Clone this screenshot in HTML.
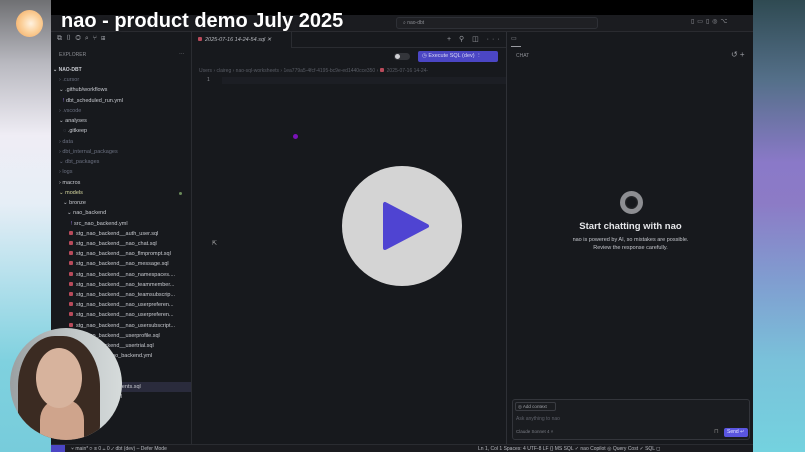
<!DOCTYPE html>
<html><head><meta charset="utf-8"><style>
*{margin:0;padding:0;box-sizing:border-box}
body{width:805px;height:452px;overflow:hidden;position:relative;font-family:"Liberation Sans",sans-serif;background:#000}
.lg{position:absolute;left:0;top:0;width:51px;height:452px;background:linear-gradient(180deg,#6f7073 0%,#b9b9c0 14%,#efedf5 30%,#e6eef6 45%,#b4e0ec 62%,#7fd1df 80%,#77ccdb 100%)}
.rg{position:absolute;left:753px;top:0;width:52px;height:452px;background:linear-gradient(180deg,#2f4a52 0%,#55708a 18%,#8a79c8 36%,#8c7bc6 45%,#809dd0 62%,#7ac2da 80%,#74d2df 100%)}
.app{position:absolute;left:51px;top:0;width:702px;height:452px;background:#181a1e;overflow:hidden}
.topblk{position:absolute;left:0;top:0;width:702px;height:15px;background:#000}
.tbar{position:absolute;left:0;top:15px;width:702px;height:17px;background:#1b1c20;border-bottom:1px solid #2a2b30}
.search{position:absolute;left:345px;top:2px;width:202px;height:12px;border:1px solid #2e3036;border-radius:3px;background:#1f2024;color:#8a8c92;font-size:5px;line-height:10px;padding-left:6px}
.side{position:absolute;left:0;top:32px;width:141px;height:412px;background:#17191d;border-right:1px solid #2a2c31}
.ed{position:absolute;left:141px;top:32px;width:314px;height:412px;background:#17191d}
.chat{position:absolute;left:455px;top:32px;width:247px;height:412px;background:#17191d;border-left:1px solid #2e3036}
.status{position:absolute;left:0;top:444px;width:702px;height:8px;background:#1a1b1f;border-top:1px solid #2a2c31;font-size:5px;color:#b8bac0;line-height:8px;white-space:nowrap}
.t{position:absolute;font-size:5.5px;color:#c7c9cf;white-space:nowrap}
.row{position:absolute;font-size:5.5px;color:#c9cbd1;white-space:nowrap;height:10px;line-height:10px}
.dim{color:#6b7080}
.sq{display:inline-block;width:4px;height:4px;background:#b84a5a;border-radius:1px;margin-right:3px;vertical-align:0}
.title{position:absolute;left:61px;top:10px;font-size:20px;font-weight:bold;color:#fff;text-shadow:0 0 3px rgba(0,0,0,.4);white-space:nowrap}
.logo{position:absolute;left:16px;top:10px;width:27px;height:27px;border-radius:50%;background:radial-gradient(circle at 55% 50%,#fff2e0 0%,#fbd09a 45%,#f2a55a 100%)}
.play{position:absolute;left:342px;top:166px;width:120px;height:120px;border-radius:50%;background:#d4d4d4}
.cam{position:absolute;left:10px;top:328px;width:112px;height:112px;border-radius:50%;overflow:hidden;background:linear-gradient(90deg,#9aa0a2,#c3c9ca 60%,#d6dbdb)}
.hair{position:absolute;left:8px;top:8px;width:82px;height:112px;border-radius:45% 45% 20% 20%;background:#3b2b22}
.face{position:absolute;left:26px;top:20px;width:46px;height:60px;border-radius:50%;background:#d7b39d}
.neck{position:absolute;left:30px;top:72px;width:44px;height:50px;border-radius:40% 40% 0 0;background:#cfa48c}
</style></head><body>
<div class="lg"></div><div class="rg"></div>
<div class="app">
<div class="topblk"></div>
<div class="tbar"><div class="search">⌕ nao-dbt</div>
<div class="t" style="left:640px;top:3px;color:#9a9ca2;font-size:6px;letter-spacing:3px">▯▭▯◎⌥</div></div>
<div class="side">
<div class="t" style="left:6px;top:3px;color:#9a9ca2;font-size:7px;letter-spacing:4px">⧉▯◎⌕⑂⊞</div>
<div class="t" style="left:8px;top:20px;font-size:5px;color:#8c8e94">EXPLORER</div>
<div class="t" style="left:128px;top:19px;color:#8c8e94">···</div>
<div class="row" style="left:2px;top:33px;font-weight:bold;font-size:5px">⌄ NAO-DBT</div>
<div class="row dim" style="left:8px;top:43px">›  .cursor</div>
<div class="row" style="left:8px;top:53px">⌄ .github/workflows</div>
<div class="row" style="left:12px;top:64px"><span style="color:#9b7be0">!</span>  dbt_scheduled_run.yml</div>
<div class="row dim" style="left:8px;top:74px">›  .vscode</div>
<div class="row" style="left:8px;top:84px">⌄ analyses</div>
<div class="row" style="left:12px;top:94px"><span class="dim">◌</span> .gitkeep</div>
<div class="row dim" style="left:8px;top:105px">›  data</div>
<div class="row dim" style="left:8px;top:115px">›  dbt_internal_packages</div>
<div class="row dim" style="left:8px;top:125px">⌄ dbt_packages</div>
<div class="row dim" style="left:8px;top:135px">›  logs</div>
<div class="row" style="left:8px;top:146px">›  macros</div>
<div class="row" style="left:8px;top:156px;color:#d8d9a0">⌄ models</div>
<div style="position:absolute;left:128px;top:160px;width:3px;height:3px;border-radius:50%;background:#6a8a5a"></div>
<div class="row" style="left:12px;top:166px">⌄ bronze</div>
<div class="row" style="left:16px;top:176px">⌄ nao_backend</div>
<div class="row" style="left:20px;top:187px"><span style="color:#9b7be0">!</span>  src_nao_backend.yml</div>
<div class="row" style="left:18px;top:197px"><span class="sq"></span>stg_nao_backend__auth_user.sql</div>
<div class="row" style="left:18px;top:207px"><span class="sq"></span>stg_nao_backend__nao_chat.sql</div>
<div class="row" style="left:18px;top:217px"><span class="sq"></span>stg_nao_backend__nao_flmprompt.sql</div>
<div class="row" style="left:18px;top:227px"><span class="sq"></span>stg_nao_backend__nao_message.sql</div>
<div class="row" style="left:18px;top:238px"><span class="sq"></span>stg_nao_backend__nao_namespaces....</div>
<div class="row" style="left:18px;top:248px"><span class="sq"></span>stg_nao_backend__nao_teammember...</div>
<div class="row" style="left:18px;top:258px"><span class="sq"></span>stg_nao_backend__nao_teamsubscrip...</div>
<div class="row" style="left:18px;top:268px"><span class="sq"></span>stg_nao_backend__nao_userpreferen...</div>
<div class="row" style="left:18px;top:278px"><span class="sq"></span>stg_nao_backend__nao_userpreferen...</div>
<div class="row" style="left:18px;top:289px"><span class="sq"></span>stg_nao_backend__nao_usersubscript...</div>
<div class="row" style="left:18px;top:299px"><span class="sq"></span>stg_nao_backend__userprofile.sql</div>
<div class="row" style="left:18px;top:309px"><span class="sq"></span>stg_nao_backend__usertrial.sql</div>
<div class="row" style="left:58px;top:319px">nao_backend.yml</div>
<div class="row" style="left:65px;top:340px">l</div>
<div style="position:absolute;left:0;top:350px;width:140px;height:10px;background:#2a2b3c"></div>
<div class="row" style="left:65px;top:350px">events.sql</div>
<div class="row" style="left:65px;top:360px">ml</div>
</div>
<div class="ed">
<div style="position:absolute;left:0;top:0;width:100px;height:16px;background:#17191d;border-right:1px solid #2a2c31"></div>
<div class="t" style="left:6px;top:5px;font-style:italic;color:#b9bbc1"><span class="sq"></span>2025-07-16 14-24-54.sql  ✕</div>
<div style="position:absolute;left:100px;top:15px;width:214px;height:1px;background:#2a2c31"></div>
<div class="t" style="left:255px;top:3px;color:#9a9ca2;font-size:7px;letter-spacing:3px">+ ⚲ ◫ ···</div>
<div style="position:absolute;left:202px;top:21px;width:16px;height:7px;border-radius:4px;background:#33353a"></div>
<div style="position:absolute;left:203px;top:22px;width:5px;height:5px;border-radius:50%;background:#cfd0d4"></div>
<div style="position:absolute;left:226px;top:19px;width:80px;height:11px;border-radius:2px;background:#4b46c4;color:#d8d8f4;font-size:5.5px;line-height:11px;padding-left:4px">◷ Execute SQL (dev)  ⋮</div>
<div class="t" style="left:7px;top:36px;font-size:5px;color:#5a5d66">Users › claireg › nao-sql-worksheets › 1ea779a5-4fcf-4195-bc9e-ed1440cce350 › <span class="sq"></span>2025-07-16 14-24-</div>
<div style="position:absolute;left:30px;top:45px;width:284px;height:7px;background:#1c1e24"></div>
<div class="t" style="left:15px;top:45px;font-size:5px;color:#8a8c92">1</div>
<div style="position:absolute;left:101px;top:102px;width:5px;height:5px;border-radius:50%;background:#7a12b8"></div>
<div class="t" style="left:20px;top:208px;color:#bbb;font-size:6px">⇱</div>
</div>
<div class="chat">
<div class="t" style="left:4px;top:3px;color:#9a9ca2;font-size:6px">▭</div>
<div style="position:absolute;left:4px;top:14px;width:10px;height:1px;background:#9a9ca2"></div>
<div class="t" style="left:9px;top:21px;font-size:5px;color:#8c8e94">CHAT</div>
<div class="t" style="left:224px;top:18px;color:#9a9ca2;font-size:8px">↺ +</div>
<div style="position:absolute;left:113px;top:159px;width:23px;height:23px;border-radius:50%;border:5px solid #8d8e92;box-shadow:inset 0 0 2px #444"></div>
<div class="t" style="left:0;width:247px;text-align:center;top:189px;font-size:9.5px;font-weight:bold;color:#e6e7ea">Start chatting with nao</div>
<div class="t" style="left:0;width:247px;text-align:center;top:205px;font-size:5.5px;color:#c4c6cc;line-height:7.5px">nao is powered by AI, so mistakes are possible.<br>Review the response carefully.</div>
<div style="position:absolute;left:5px;top:367px;width:238px;height:41px;border:1px solid #33353b;border-radius:3px;background:#1a1c20"></div>
<div style="position:absolute;left:8px;top:370px;width:41px;height:9px;border:1px solid #3a3c42;border-radius:2px;font-size:4.5px;color:#a2a4aa;line-height:7px;padding-left:2px">◎ Add context</div>
<div class="t" style="left:9px;top:384px;font-size:5px;color:#5e616a">Ask anything to nao</div>
<div class="t" style="left:9px;top:397px;font-size:4.5px;color:#7b7e86">Claude Sonnet 4  ˄</div>
<div class="t" style="left:207px;top:396px;font-size:6px;color:#888">⊓</div>
<div style="position:absolute;left:217px;top:396px;width:24px;height:9px;border-radius:2px;background:#5a55e0;color:#e8e8ff;font-size:5px;line-height:9px;padding-left:3px">Send ↵</div>
</div>
<div class="status">
<div style="position:absolute;left:0;top:0;width:14px;height:8px;background:#4b46c4"></div>
<span style="position:absolute;left:20px">⑂ main* ⟳   ⊗ 0 ⚠ 0   ✓ dbt (dev)   – Defer Mode</span>
<span style="position:absolute;left:427px">Ln 1, Col 1   Spaces: 4   UTF-8   LF   {} MS SQL   ✓ nao Copilot   ◎ Query Cost   ✓ SQL   ◻</span>
</div>
</div>
<div class="logo"></div>
<div class="title">nao - product demo July 2025</div>
<div class="play"><svg width="120" height="120" viewBox="0 0 120 120"><path d="M43 38 L43 82 L85 60 Z" fill="#4f44d2" stroke="#4f44d2" stroke-width="4" stroke-linejoin="round"/></svg></div>
<div class="cam"><div class="hair"></div><div class="neck"></div><div class="face"></div></div>
</body></html>
